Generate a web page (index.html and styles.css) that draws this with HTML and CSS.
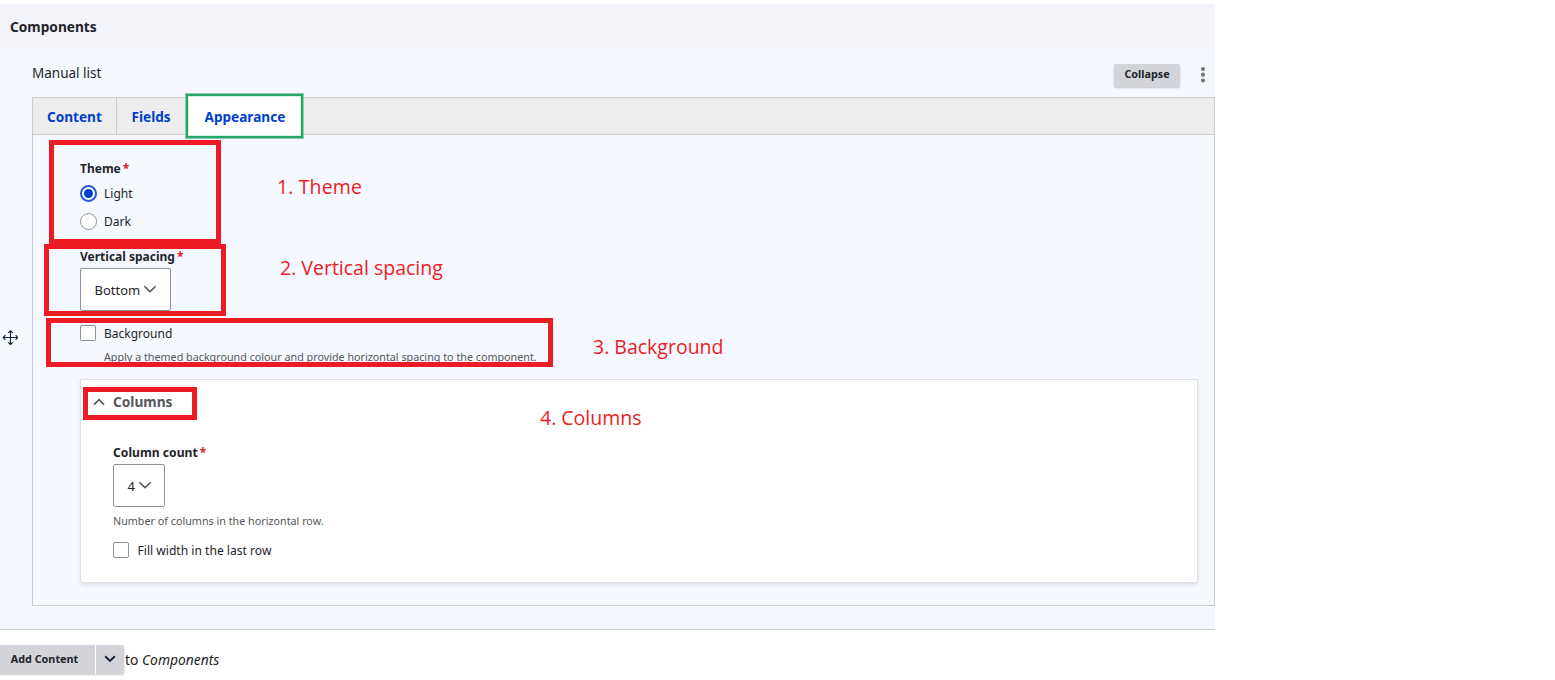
FILE: index.html
```
<!DOCTYPE html>
<html lang="en">
<head>
<meta charset="utf-8">
<title>Components</title>
<link rel="stylesheet" href="styles.css">
</head>
<body>
<main class="page">
  <header class="section-head">Components</header>
  <section class="component">
    <div class="drag">
      <svg width="16" height="16" viewBox="0 0 16 16" fill="none" stroke="#15203d" stroke-width="1.15"><path d="M8.5 1v14M1 7.5h15M6.2 2.9 8.5.8l2.3 2.1M6.2 12.4l2.3 2.1 2.3-2.1M3.4 5.2 1.2 7.5l2.2 2.3M13.6 5.2l2.2 2.3-2.2 2.3"/></svg>
    </div>
    <div class="component-body">
      <div class="component-bar">
        <span class="component-title">Manual list</span>
        <button class="btn-collapse">Collapse</button>
        <svg class="dots" width="6" height="18" viewBox="0 0 6 18" fill="#757575"><circle cx="3" cy="3" r="2.1"/><circle cx="3" cy="8.7" r="2.1"/><circle cx="3" cy="14.5" r="2.1"/></svg>
      </div>
      <div class="tabbox">
        <nav class="tabs">
          <a class="tab tab-content">Content</a>
          <a class="tab tab-fields">Fields</a>
          <a class="tab tab-active">Appearance</a>
        </nav>
        <div class="pane">
          <div class="label">Theme<span class="req">*</span></div>
          <label class="choice light"><span class="radio on"></span><span class="choice-text">Light</span></label>
          <label class="choice dark"><span class="radio"></span><span class="choice-text">Dark</span></label>
          <div class="label vspace">Vertical spacing<span class="req">*</span></div>
          <div class="select bottom">Bottom<svg width="14" height="8" viewBox="0 0 14 8" fill="none" stroke="#55565b" stroke-width="1.5"><path d="M1.3 1.2 7 6.6l5.7-5.4"/></svg></div>
          <label class="choice bg"><span class="check"></span><span class="choice-text">Background</span></label>
          <div class="help bg-help">Apply a themed background colour and provide horizontal spacing to the component.</div>
          <div class="card">
            <div class="summary"><svg width="12" height="8" viewBox="0 0 12 8" fill="none" stroke="#55565b" stroke-width="1.7"><path d="M1 6.6 6 1.6l5 5"/></svg>Columns</div>
            <div class="label count">Column count<span class="req">*</span></div>
            <div class="select four">4<svg width="14" height="8" viewBox="0 0 14 8" fill="none" stroke="#55565b" stroke-width="1.5"><path d="M1.3 1.2 7 6.6l5.7-5.4"/></svg></div>
            <div class="help count-help">Number of columns in the horizontal row.</div>
            <label class="choice fill"><span class="check"></span><span class="choice-text">Fill width in the last row</span></label>
          </div>
        </div>
      </div>
    </div>
  </section>
  <footer class="add-row">
    <div class="split">
      <button class="add">Add Content</button>
      <button class="more"><svg width="12" height="8" viewBox="0 0 12 8" fill="none" stroke="#15203d" stroke-width="1.9"><path d="M1.2 1.3 6 6l4.8-4.7"/></svg></button>
    </div>
    <span class="to">to <em>Components</em></span>
  </footer>
</main>
<div class="mark mark-theme"></div>
<div class="mark mark-spacing"></div>
<div class="mark mark-background"></div>
<div class="mark mark-columns"></div>
<div class="note note-theme">1. Theme</div>
<div class="note note-spacing">2. Vertical spacing</div>
<div class="note note-background">3. Background</div>
<div class="note note-columns">4. Columns</div>
</body>
</html>
```

FILE: styles.css
```
* { box-sizing: border-box; }
body {
  margin: 0;
  padding-top: 4px;
  position: relative;
  height: 680px;
  overflow: hidden;
  background: #fff;
  color: #232429;
  font: 13px/18px "Noto Sans", "Open Sans", sans-serif;
}
button { border: 0; padding: 0; color: inherit; font: bold 10.8px/18px "Noto Sans", sans-serif; }
svg { display: block; flex: none; }
.page { width: 1215px; }
.section-head { height: 44px; padding: 14px 10px; background: #f3f4f9; font-size: 13.7px; font-weight: bold; }
.component { display: flex; height: 582px; background: #f5f8ff; border-bottom: 1px solid #d0d1d4; }
.drag { width: 32px; padding: 282px 0 0 2px; }
.component-body { flex: 1; }
.component-bar { display: flex; height: 49px; padding-top: 16px; }
.component-title { flex: 1; font-size: 13.5px; }
.btn-collapse { width: 66px; height: 23px; padding-bottom: 3px; border-radius: 2px; background: #d3d4d9; box-shadow: 0 1px 2px rgba(0,0,0,.22); }
.dots { margin: 1.7px 8.7px 0 20.3px; }

.tabbox { height: 509px; border: 1px solid #ccc; }
.tabs { display: flex; height: 37px; background: #ededed; border-bottom: 1px solid #ccc; }
.tab { height: 36px; padding: 10px 0 0 14px; color: #003ecc; font-size: 13.6px; font-weight: bold; line-height: 18px; }
.tab-content { width: 84px; border-right: 1px solid #ccc; }
.tab-fields { width: 68px; padding-left: 14.5px; }
.tab-active { width: 119px; height: 46px; margin-top: -5px; padding: 14px 0 0 18.5px; background: #fff; border: 1px solid #88cead; box-shadow: inset 0 0 0 2px #26a769, inset 0 0 0 3px #d6ede2; }

.pane { padding: 24px 16px 0 47px; }
.label { height: 18px; font-size: 12px; font-weight: bold; line-height: 20px; white-space: nowrap; }
.req { margin-left: 2px; color: #d72222; font-size: 12px; line-height: 1; }
.choice { display: flex; align-items: center; gap: 7px; height: 18px; font-size: 12px; white-space: nowrap; }
.choice-text { padding-top: 2px; }
.light { margin-top: 7px; }
.dark { margin-top: 10px; }
.radio { display: grid; place-items: center; width: 17px; height: 17px; border: 1px solid #8e929c; border-radius: 50%; background: #fff; }
.radio.on { border: 2px solid #2459d3; }
.radio.on::after { content: ""; width: 9px; height: 9px; border-radius: 50%; background: #003ecc; }
.vspace { margin-top: 17px; }
.select { display: flex; align-items: center; height: 43px; padding: 1px 0 0 13.5px; border: 1px solid #8e929c; border-radius: 2px; background: #fff; }
.select svg { margin: -3px 0 0 3px; }
.bottom { width: 91px; margin-top: 3px; }
.check { width: 16px; height: 16px; border: 1px solid #8e929c; border-radius: 2px; background: #fff; }
.bg { gap: 8px; margin-top: 13px; }
.help { height: 16px; color: #55565b; font-size: 10.75px; line-height: 16px; white-space: nowrap; }
.bg-help { margin: 7px 0 0 24px; }
.card { height: 204px; margin-top: 14px; padding: 13px 0 0 32px; border: 1px solid #dedfe4; border-radius: 2px; background: #fff; box-shadow: 0 2px 4px rgba(0,0,0,.1); }
.summary { display: flex; align-items: center; gap: 8px; height: 18px; margin-left: -20px; color: #55565b; font-size: 13.7px; font-weight: bold; }
.count { margin-top: 32px; font-size: 12.15px; }
.four { width: 52px; margin-top: 3px; }
.count-help { margin-top: 6px; }
.fill { gap: 8.5px; margin-top: 12px; font-size: 12.1px; }

.add-row { display: flex; padding-top: 15px; }
.split { display: flex; gap: 1px; height: 29px; border-radius: 0 2px 2px 0; box-shadow: 0 1px 2px rgba(0,0,0,.22); background: #fff; }
.add { width: 95px; padding: 0 6px 1px 0; background: #d3d4d9; }
.more { display: grid; place-items: center; width: 28px; padding-bottom: 2px; border-radius: 0 2px 2px 0; background: #d3d4d9; }
.to { padding: 6px 0 0 1px; font-size: 13.85px; white-space: nowrap; }

/* Annotations drawn over the form */
.mark { position: absolute; border: 5px solid #ed1c24; }
.mark-theme { left: 49px; top: 140px; width: 172px; height: 104px; }
.mark-spacing { left: 44px; top: 244px; width: 182px; height: 72px; }
.mark-background { left: 46px; top: 318px; width: 507px; height: 49px; }
.mark-columns { left: 83px; top: 387px; width: 114px; height: 33px; }
.note { position: absolute; color: #ed1c24; font: 19.5px/26px "Open Sans", sans-serif; white-space: nowrap; }
.note-theme { left: 277px; top: 174px; letter-spacing: .12px; }
.note-spacing { left: 280px; top: 255px; }
.note-background { left: 593px; top: 334px; }
.note-columns { left: 540px; top: 405px; }
```
